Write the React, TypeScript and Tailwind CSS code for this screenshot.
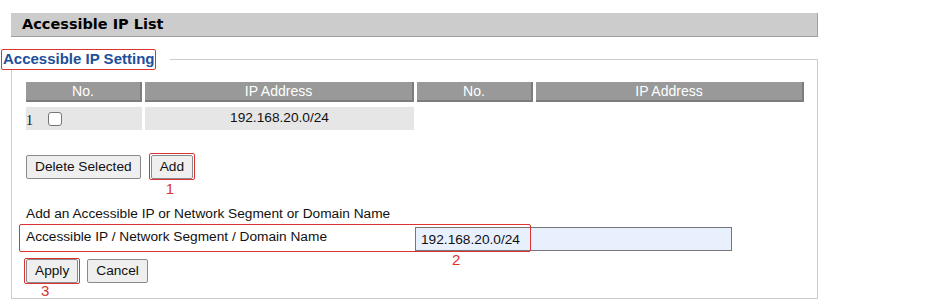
// red annotation boxes drawn over the page
function Mark({ className }: { className: string }) {
  return <span className={`pointer-events-none absolute z-10 rounded-[2px] border border-[#dc3232] ${className}`} />
}

function Num({ n, className }: { n: string; className: string }) {
  return <span className={`absolute text-[15px] leading-none text-[#dc3232] ${className}`}>{n}</span>
}

function Btn({ label, pad }: { label: string; pad: string }) {
  return (
    <button
      type="button"
      className={`h-[24px] rounded-[2px] border border-[#8a8a8a] bg-[#efefef] ${pad} text-[13.7px] leading-none text-[#111]`}
    >
      {label}
    </button>
  )
}

const HEAD = [
  ['No.', 'w-[116px]'],
  ['IP Address', 'w-[269px]'],
  ['No.', 'w-[116px]'],
  ['IP Address', 'w-[268px]'],
]

export default function App() {
  return (
    <div className="h-[305px] w-[951px] bg-white pt-[13px] font-['Liberation_Sans',Tahoma,sans-serif] text-[13.7px] text-[#111]">
      <div className="ml-[11px] flex h-[24px] w-[807px] items-center border-b border-r border-[#a0a0a0] bg-[#cccccc] pl-[11px] font-['DejaVu_Sans',Verdana,sans-serif] text-[14.5px] font-bold text-black">
        Accessible IP List
      </div>

      <div className="relative ml-[11px] mt-[22px] h-[240px] w-[807px] border border-[#cccccc] pl-[14px] pt-[22px]">
        {/* legend */}
        <div className="absolute -left-[12px] -top-[11px] h-[21px] w-[170px] bg-white">
          <div className="relative ml-[1px] inline-flex h-[21px] items-center px-[2px] text-[15px] font-bold text-[#1d4f9a]">
            Accessible IP Setting
            <Mark className="inset-0" />
          </div>
        </div>

        {/* table */}
        <div className="flex gap-[3px] text-white">
          {HEAD.map(([t, w], i) => (
            <div
              key={i}
              className={`${w} flex h-[20px] items-center justify-center border-b-2 border-r-2 border-[#7c7c7c] bg-[#999999] text-[14px]`}
            >
              {t}
            </div>
          ))}
        </div>
        <div className="mt-[5px] flex gap-[3px]">
          <div className="flex h-[23px] w-[116px] items-center bg-[#e6e6e6]">
            <span className="mt-[4px] font-['Liberation_Serif',serif] text-[14px]">1</span>
            <span className="ml-[15px] inline-block h-[14px] w-[14px] rounded-[3px] border border-[#767676] bg-white" />
          </div>
          <div className="flex h-[23px] w-[269px] items-center justify-center bg-[#e6e6e6]">192.168.20.0/24</div>
        </div>

        {/* buttons */}
        <div className="mt-[25px] flex items-center gap-[10px]">
          <Btn label="Delete Selected" pad="px-[8px]" />
          <div className="relative flex">
            <Btn label="Add" pad="px-[8px]" />
            <Mark className="-inset-x-[2px] -bottom-[1px] -top-[2px]" />
            <Num n="1" className="left-[15px] top-[26px]" />
          </div>
        </div>

        <div className="mt-[27px] leading-[16px]">Add an Accessible IP or Network Segment or Domain Name</div>

        <div className="relative mt-[2px] flex h-[27px] items-center">
          Accessible IP / Network Segment / Domain Name
          <input
            readOnly
            value="192.168.20.0/24"
            className="absolute left-[389px] top-[3px] h-[24px] w-[317px] border border-[#767676] bg-[#e8f0fe] pl-[5px] text-[13.7px] text-[#111] outline-none"
          />
          <Mark className="-left-[7px] top-0 h-[28px] w-[512px]" />
          <Num n="2" className="left-[426px] top-[28px]" />
        </div>

        <div className="mt-[8px] flex items-center gap-[9px]">
          <div className="relative flex">
            <Btn label="Apply" pad="px-[8px]" />
            <Mark className="-inset-x-[2px] -bottom-[1px] -top-[1px]" />
            <Num n="3" className="left-[15px] top-[24px]" />
          </div>
          <Btn label="Cancel" pad="px-[8px]" />
        </div>
      </div>
    </div>
  )
}
